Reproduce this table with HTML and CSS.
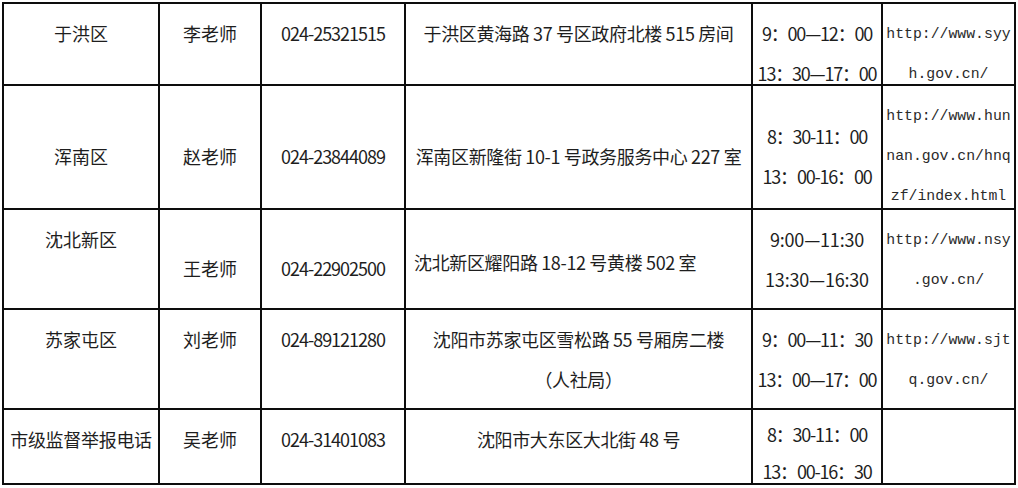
FILE: index.html
```html
<!DOCTYPE html>
<html lang="zh-CN">
<head>
<meta charset="utf-8">
<title>监督举报电话</title>
<link rel="stylesheet" href="styles.css">
</head>
<body>
<div class="sheet">
  <div class="cell">于洪区</div>
  <div class="cell">李老师</div>
  <div class="cell num">024-25321515</div>
  <div class="cell addr">于洪区黄海路 37 号区政府北楼 515 房间</div>
  <div class="cell time">9：00—12：00<br>13：30—17：00</div>
  <div class="cell url">http://www.syy<br>h.gov.cn/</div>

  <div class="cell mid">浑南区</div>
  <div class="cell mid">赵老师</div>
  <div class="cell mid num">024-23844089</div>
  <div class="cell mid addr">浑南区新隆街 10-1 号政务服务中心 227 室</div>
  <div class="cell mid time">8：30-11：00<br>13：00-16：00</div>
  <div class="cell url">http://www.hun<br>nan.gov.cn/hnq<br>zf/index.html</div>

  <div class="cell">沈北新区</div>
  <div class="cell mid">王老师</div>
  <div class="cell mid num">024-22902500</div>
  <div class="cell mid addr addr-left">沈北新区耀阳路 18-12 号黄楼 502 室</div>
  <div class="cell time-ascii">9:00—11:30<br>13:30—16:30</div>
  <div class="cell url">http://www.nsy<br>.gov.cn/</div>

  <div class="cell">苏家屯区</div>
  <div class="cell">刘老师</div>
  <div class="cell num">024-89121280</div>
  <div class="cell addr">沈阳市苏家屯区雪松路 55 号厢房二楼<br>（人社局）</div>
  <div class="cell time">9：00—11：30<br>13：00—17：00</div>
  <div class="cell url">http://www.sjt<br>q.gov.cn/</div>

  <div class="cell wide">市级监督举报电话</div>
  <div class="cell">吴老师</div>
  <div class="cell num">024-31401083</div>
  <div class="cell addr">沈阳市大东区大北街 48 号</div>
  <div class="cell time tight">8：30-11：00<br>13：00-16：30</div>
  <div class="cell url"></div>
</div>
</body>
</html>
```

FILE: styles.css
```css
html, body {
  margin: 0;
  padding: 0;
  background: #ffffff;
}

body {
  width: 1018px;
  height: 488px;
  overflow: hidden;
  font-family: "Noto Sans CJK SC", "Noto Sans", sans-serif;
  color: #1e1e1e;
}

.sheet {
  margin: 2px 0 0 2px;
  width: 1014px;
  display: grid;
  grid-template-columns: 154px 100px 142px 345px 128px 131px;
  grid-template-rows: 80px 122px 98px 98px 73px;
  gap: 2px;
  padding: 2px;
  box-sizing: border-box;
  background: #0d0d0d;
}

.cell {
  background: #ffffff;
  font-size: 18px;
  line-height: 40px;
  text-align: center;
  padding-top: 9px;
  box-sizing: border-box;
  white-space: nowrap;
  overflow: visible;
}

.mid {
  display: flex;
  flex-direction: column;
  justify-content: center;
  padding-top: 18px;
}

.addr {
  letter-spacing: -0.35px;
}

.addr-left {
  padding-top: 6px;
  align-items: flex-start;
  padding-left: 8px;
}

.num {
  letter-spacing: -1px;
}

.time {
  letter-spacing: -1.2px;
}

.time-ascii {
  letter-spacing: -0.2px;
}

.wide {
  letter-spacing: -0.3px;
}

.tight {
  line-height: 37px;
  padding-top: 6px;
}

.url {
  font-family: "Liberation Mono", "DejaVu Sans Mono", monospace;
  font-size: 14.8px;
  color: #2a2a2a;
  padding-top: 10px;
}
```
